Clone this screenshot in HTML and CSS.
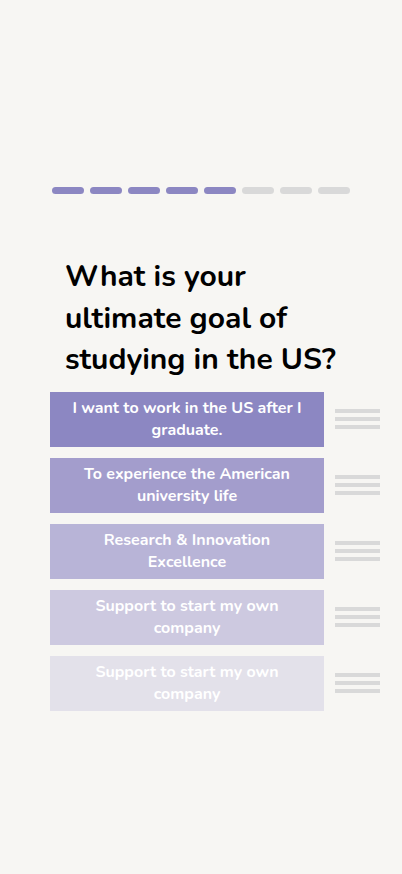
FILE: index.html
```html
<!DOCTYPE html>
<html lang="en">
<head>
    <meta charset="UTF-8">
    <meta name="viewport" content="width=device-width, initial-scale=1.0">
    <title>Quiz - Goal</title>
    <link rel="stylesheet" href="styles.css">
</head>
<body>
    <div class="screen">
        <!-- progression du quiz -->
        <div class="progress">
            <span class="step done"></span>
            <span class="step done"></span>
            <span class="step done"></span>
            <span class="step done"></span>
            <span class="step done"></span>
            <span class="step"></span>
            <span class="step"></span>
            <span class="step"></span>
        </div>

        <h1 class="question">What is your ultimate goal of studying in the US?</h1>

        <div class="options">
            <div class="option">
                <div class="card rank1">I want to work in the US after I graduate.</div>
                <div class="handle"><span></span><span></span><span></span></div>
            </div>
            <div class="option">
                <div class="card rank2">To experience the American university life</div>
                <div class="handle"><span></span><span></span><span></span></div>
            </div>
            <div class="option">
                <div class="card rank3">Research &amp; Innovation Excellence</div>
                <div class="handle"><span></span><span></span><span></span></div>
            </div>
            <div class="option">
                <div class="card rank4">Support to start my own company</div>
                <div class="handle"><span></span><span></span><span></span></div>
            </div>
            <div class="option">
                <div class="card rank5">Support to start my own company</div>
                <div class="handle"><span></span><span></span><span></span></div>
            </div>
        </div>
    </div>
</body>
</html>
```

FILE: styles.css
```css
body {
    margin: 0;
    background: #f7f6f3;
    font-family: 'Nunito', 'Lato', sans-serif;
    color: #000;
}

.screen {
    width: 402px;
    min-height: 874px;
    box-sizing: border-box;
    padding-top: 187px;
}

.progress {
    display: flex;
    gap: 6px;
    margin-left: 52px;
}

.step {
    width: 32px;
    height: 7px;
    border-radius: 4px;
    background: #d9d9d9;
}

.step.done {
    background: #8c87c2;
}

.question {
    margin: 62px 0 0 65px;
    width: 290px;
    font-size: 30px;
    line-height: 41.5px;
    font-weight: 700;
}

.options {
    display: flex;
    flex-direction: column;
    gap: 11px;
    margin: 11px 0 0 50px;
}

.option {
    display: flex;
    align-items: center;
    gap: 11px;
}

.card {
    width: 274px;
    height: 55px;
    box-sizing: border-box;
    padding: 0 20px;
    display: flex;
    align-items: center;
    justify-content: center;
    text-align: center;
    color: #fff;
    font-size: 16px;
    line-height: 22px;
    font-weight: 700;
}

.rank1 { background: #8c87c2; }
.rank2 { background: #a39dcc; }
.rank3 { background: #b8b4d7; }
.rank4 { background: #cdc9e0; }
.rank5 { background: #e3e1ea; }

.handle {
    display: flex;
    flex-direction: column;
    gap: 4.5px;
}

.handle span {
    width: 45px;
    height: 3.5px;
    background: #d9d9d9;
}
```
